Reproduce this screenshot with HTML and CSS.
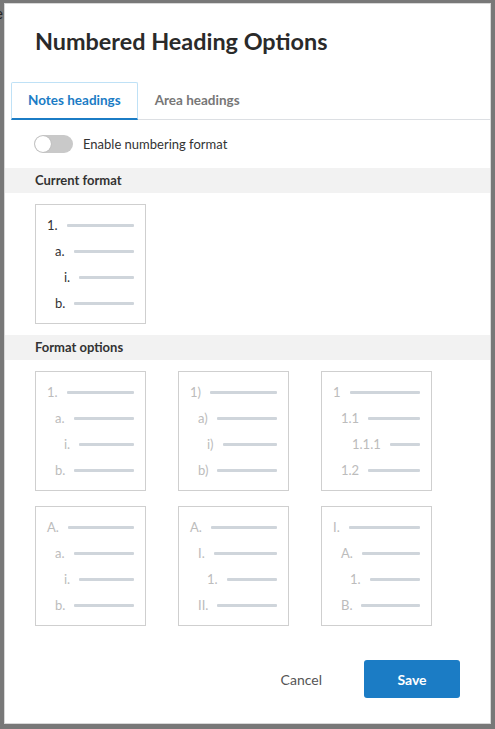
FILE: index.html
```html
<!DOCTYPE html>
<html>
<head>
<meta charset="utf-8">
<link rel="stylesheet" href="styles.css">
</head>
<body>
<span class="behind">e</span>
<div class="dialog">
  <h1 class="title">Numbered Heading Options</h1>
  <div class="tabs">
    <div class="tab active">Notes headings</div>
    <div class="tab">Area headings</div>
  </div>
  <div class="toggle-row">
    <span class="toggle"><span class="knob"></span></span>
    <span class="toggle-label">Enable numbering format</span>
  </div>
  <div class="band">Current format</div>
  <div class="current">
    <div class="card dark">
      <div class="row l1"><span class="lab">1.</span><span class="bar"></span></div>
      <div class="row l2"><span class="lab">a.</span><span class="bar"></span></div>
      <div class="row l3"><span class="lab">i.</span><span class="bar"></span></div>
      <div class="row l2"><span class="lab">b.</span><span class="bar"></span></div>
    </div>
  </div>
  <div class="band">Format options</div>
  <div class="grid">
    <div class="card">
      <div class="row l1"><span class="lab">1.</span><span class="bar"></span></div>
      <div class="row l2"><span class="lab">a.</span><span class="bar"></span></div>
      <div class="row l3"><span class="lab">i.</span><span class="bar"></span></div>
      <div class="row l2"><span class="lab">b.</span><span class="bar"></span></div>
    </div>
    <div class="card">
      <div class="row l1"><span class="lab">1)</span><span class="bar"></span></div>
      <div class="row l2"><span class="lab">a)</span><span class="bar"></span></div>
      <div class="row l3"><span class="lab">i)</span><span class="bar"></span></div>
      <div class="row l2"><span class="lab">b)</span><span class="bar"></span></div>
    </div>
    <div class="card">
      <div class="row l1"><span class="lab">1</span><span class="bar"></span></div>
      <div class="row l2"><span class="lab">1.1</span><span class="bar"></span></div>
      <div class="row l3w"><span class="lab">1.1.1</span><span class="bar"></span></div>
      <div class="row l2"><span class="lab">1.2</span><span class="bar"></span></div>
    </div>
    <div class="card">
      <div class="row l1"><span class="lab">A.</span><span class="bar"></span></div>
      <div class="row l2"><span class="lab">a.</span><span class="bar"></span></div>
      <div class="row l3"><span class="lab">i.</span><span class="bar"></span></div>
      <div class="row l2"><span class="lab">b.</span><span class="bar"></span></div>
    </div>
    <div class="card">
      <div class="row l1"><span class="lab">A.</span><span class="bar"></span></div>
      <div class="row l2"><span class="lab">I.</span><span class="bar"></span></div>
      <div class="row l3"><span class="lab">1.</span><span class="bar"></span></div>
      <div class="row l2"><span class="lab">II.</span><span class="bar"></span></div>
    </div>
    <div class="card">
      <div class="row l1"><span class="lab">I.</span><span class="bar"></span></div>
      <div class="row l2"><span class="lab">A.</span><span class="bar"></span></div>
      <div class="row l3"><span class="lab">1.</span><span class="bar"></span></div>
      <div class="row l2"><span class="lab">B.</span><span class="bar"></span></div>
    </div>
  </div>
  <div class="footer">
    <button class="btn cancel">Cancel</button>
    <button class="btn save">Save</button>
  </div>
</div>
</body>
</html>
```
FILE: styles.css
```css
html, body {
  margin: 0;
  padding: 0;
}
body {
  background: #787878;
  width: 495px;
  height: 729px;
  overflow: hidden;
  padding: 4px 5px 0 5px;
  box-sizing: border-box;
  font-family: Lato, "Open Sans", sans-serif;
  position: relative;
}
.behind {
  position: absolute;
  left: -5px;
  top: 4px;
  font-size: 15px;
  color: #222;
  font-family: Lato, sans-serif;
}
.dialog {
  position: relative;
  width: 485px;
  height: 719px;
  background: #fff;
  box-shadow: 0 0 0 1px #d8d8d8;
  display: flex;
  flex-direction: column;
}
.title {
  margin: 23px 0 0 30px;
  font-size: 23.4px;
  line-height: 29px;
  font-weight: 700;
  color: #2a2a2a;
  letter-spacing: 0;
}
.tabs {
  margin: 26px 0 0 6px;
  display: flex;
  border-bottom: 1px solid #dcdfe3;
}
.tab {
  padding: 0 16px;
  height: 35px;
  line-height: 35px;
  font-size: 13.5px;
  font-weight: 700;
  color: #777;
  border: 1px solid transparent;
  border-bottom: 2px solid transparent;
  margin-bottom: -1px;
}
.tab.active {
  color: #1b7cc5;
  border-color: #bfe1f6;
  border-bottom-color: #1b7cc5;
  border-radius: 2px 2px 0 0;
}
.toggle-row {
  margin: 15px 0 0 29px;
  display: flex;
  align-items: center;
  gap: 10px;
  height: 18px;
}
.toggle {
  width: 39px;
  height: 18px;
  border-radius: 9px;
  background: #c9c9c9;
  display: flex;
  align-items: center;
  padding-left: 1px;
  box-sizing: border-box;
}
.knob {
  width: 16px;
  height: 16px;
  border-radius: 50%;
  background: #fff;
  box-shadow: 0 0 1px rgba(0,0,0,0.3);
}
.toggle-label {
  font-size: 13px;
  color: #333;
}
.band {
  margin-top: 15px;
  height: 25px;
  line-height: 25px;
  background: #f2f2f2;
  padding-left: 30px;
  font-size: 13px;
  font-weight: 700;
  color: #333;
}
.current {
  padding: 11px 0 0 30px;
  display: flex;
}
.current + .band {
  margin-top: 11px;
}
.card {
  width: 111px;
  height: 120px;
  box-sizing: border-box;
  border: 1.5px solid #cfcfcf;
  padding: 7px 11px 7px 11px;
  display: flex;
  flex-direction: column;
  color: #bcbcbc;
}
.card.dark {
  color: #333;
}
.row {
  height: 26px;
  display: flex;
  align-items: center;
  gap: 9px;
  font-size: 13px;
}
.row.l2 { padding-left: 8px; }
.row.l3 { padding-left: 17px; }
.row.l3w { padding-left: 19px; }
.bar {
  flex: 1;
  height: 3px;
  background: #cfd5db;
  border-radius: 1px;
}
.grid {
  padding: 11px 0 0 30px;
  display: grid;
  grid-template-columns: repeat(3, 111px);
  column-gap: 32px;
  row-gap: 15px;
}
.footer {
  margin-top: auto;
  margin-bottom: 25px;
  padding-right: 30px;
  display: flex;
  justify-content: flex-end;
  align-items: center;
  gap: 22px;
}
.btn {
  font-family: Lato, "Open Sans", sans-serif;
  font-size: 14px;
  border: none;
  background: none;
  cursor: pointer;
}
.cancel {
  color: #555;
  padding: 0 20px;
  height: 38px;
}
.save {
  width: 96px;
  height: 38px;
  background: #1b7cc5;
  color: #fff;
  font-weight: 700;
  border-radius: 3px;
}
```
